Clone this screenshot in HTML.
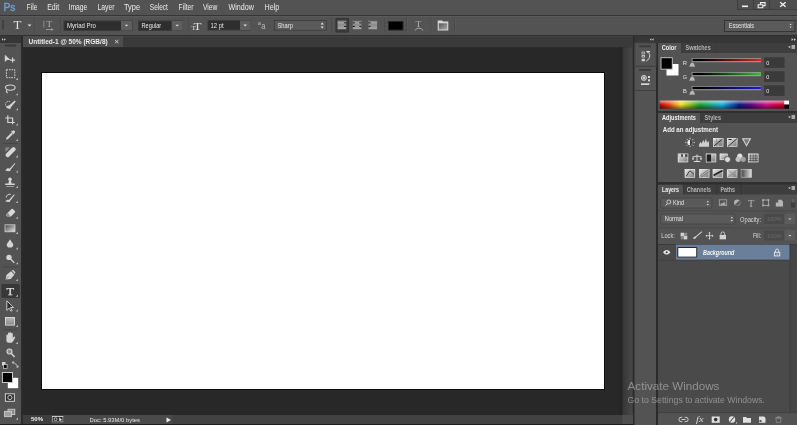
<!DOCTYPE html>
<html><head><meta charset="utf-8"><style>
*{margin:0;padding:0}
html,body{width:797px;height:425px;overflow:hidden;background:#282828}
svg{display:block;font-family:"Liberation Sans",sans-serif;will-change:transform}
</style></head><body>
<svg width="797" height="425" viewBox="0 0 797 425">
<rect x="0" y="0" width="797" height="425" fill="#282828" />
<rect x="0" y="0" width="797" height="15" fill="#535353" />
<rect x="0" y="15" width="797" height="1" fill="#363636" />
<rect x="0" y="16" width="797" height="1" fill="#5a5a5a" />
<rect x="0" y="17" width="797" height="18" fill="#535353" />
<rect x="0" y="35" width="797" height="1" fill="#303030" />
<rect x="0" y="36" width="21" height="389" fill="#535353" />
<rect x="0" y="36" width="21" height="7" fill="#363636" />
<rect x="21" y="36" width="2" height="389" fill="#2b2b2b" />
<rect x="23" y="36" width="610" height="11.3" fill="#3a3a3a" />
<rect x="23" y="36" width="610" height="0.9" fill="#444444" />
<rect x="23" y="36" width="100" height="11" fill="#4d4d4d" />
<rect x="41" y="72" width="564" height="318" fill="#0c0c0c" />
<rect x="42" y="73" width="562" height="316" fill="#ffffff" />
<rect x="23" y="415" width="600" height="9" fill="#424242" />
<rect x="622.5" y="415" width="10.5" height="9" fill="#4e4e4e" />
<rect x="23" y="415" width="149" height="9" fill="#4a4a4a" />
<rect x="0" y="424" width="797" height="1" fill="#1c1c1c" />
<defs><linearGradient id="gut" x1="0" x2="1" y1="0" y2="0"><stop offset="0" stop-color="#363636"/><stop offset="0.85" stop-color="#464646"/><stop offset="1" stop-color="#3a3a3a"/></linearGradient></defs>
<rect x="619" y="47" width="3.5" height="368" fill="#252525" />
<rect x="622.5" y="47.3" width="10.5" height="367.7" fill="url(#gut)" />
<rect x="633" y="36" width="1.5" height="389" fill="#2b2b2b" />
<rect x="634.5" y="36" width="162.5" height="7" fill="#363636" />
<rect x="634.5" y="43" width="21.5" height="382" fill="#535353" />
<rect x="656" y="43" width="2" height="382" fill="#2b2b2b" />
<rect x="658" y="43" width="139" height="382" fill="#535353" />
<text x="3.5" y="10.8" font-family="Liberation Sans" font-size="11.8" font-weight="normal" font-style="normal" fill="#6a9ed4" textLength="12.00" lengthAdjust="spacingAndGlyphs" stroke="#6a9ed4" stroke-width="0.45">Ps</text>
<text x="26.8" y="9.9" font-family="Liberation Sans" font-size="8.7" font-weight="normal" font-style="normal" fill="#ececec" textLength="10.50" lengthAdjust="spacingAndGlyphs" >File</text>
<text x="47.2" y="9.9" font-family="Liberation Sans" font-size="8.7" font-weight="normal" font-style="normal" fill="#ececec" textLength="12.00" lengthAdjust="spacingAndGlyphs" >Edit</text>
<text x="68.5" y="9.9" font-family="Liberation Sans" font-size="8.7" font-weight="normal" font-style="normal" fill="#ececec" textLength="18.80" lengthAdjust="spacingAndGlyphs" >Image</text>
<text x="97.5" y="9.9" font-family="Liberation Sans" font-size="8.7" font-weight="normal" font-style="normal" fill="#ececec" textLength="17.10" lengthAdjust="spacingAndGlyphs" >Layer</text>
<text x="124" y="9.9" font-family="Liberation Sans" font-size="8.7" font-weight="normal" font-style="normal" fill="#ececec" textLength="16.00" lengthAdjust="spacingAndGlyphs" >Type</text>
<text x="149.8" y="9.9" font-family="Liberation Sans" font-size="8.7" font-weight="normal" font-style="normal" fill="#ececec" textLength="18.10" lengthAdjust="spacingAndGlyphs" >Select</text>
<text x="178.6" y="9.9" font-family="Liberation Sans" font-size="8.7" font-weight="normal" font-style="normal" fill="#ececec" textLength="15.00" lengthAdjust="spacingAndGlyphs" >Filter</text>
<text x="203" y="9.9" font-family="Liberation Sans" font-size="8.7" font-weight="normal" font-style="normal" fill="#ececec" textLength="14.50" lengthAdjust="spacingAndGlyphs" >View</text>
<text x="228.5" y="9.9" font-family="Liberation Sans" font-size="8.7" font-weight="normal" font-style="normal" fill="#ececec" textLength="25.40" lengthAdjust="spacingAndGlyphs" >Window</text>
<text x="264.6" y="9.9" font-family="Liberation Sans" font-size="8.7" font-weight="normal" font-style="normal" fill="#ececec" textLength="14.70" lengthAdjust="spacingAndGlyphs" >Help</text>
<rect x="737" y="0" width="60" height="10" fill="#4e4e4e" />
<rect x="737" y="0" width="1" height="10" fill="#3e3e3e" />
<rect x="753" y="0" width="1" height="10" fill="#3e3e3e" />
<rect x="769" y="0" width="1" height="10" fill="#3e3e3e" />
<rect x="737" y="9" width="60" height="1" fill="#3e3e3e" />
<rect x="742" y="5.5" width="6" height="1.6" fill="#f0f0f0" />
<path d="M758.2 4.7h4.6v3h-4.6z" fill="none" stroke="#f0f0f0" stroke-width="1.1" />
<path d="M760.5 4.5v-1.9h4.6v3h-2" fill="none" stroke="#f0f0f0" stroke-width="1.1" />
<path d="M780.2 2.2l5.4 4.6M785.6 2.2l-5.4 4.6" fill="none" stroke="#f0f0f0" stroke-width="1.4" />
<rect x="2" y="20" width="2" height="9.7" fill="#404040" />
<text x="13.6" y="28.5" font-family="Liberation Serif" font-size="12.5" font-weight="normal" font-style="normal" fill="#e0e0e0" textLength="7.90" lengthAdjust="spacingAndGlyphs" >T</text>
<path d="M27.5 24.5h4l-2 2z" fill="#e0e0e0" />
<rect x="34.5" y="17" width="1" height="16" fill="#484848" />
<rect x="35.5" y="17" width="1" height="16" fill="#595959" />
<rect x="60.2" y="17" width="1" height="16" fill="#484848" />
<rect x="61.2" y="17" width="1" height="16" fill="#595959" />
<rect x="188.5" y="17" width="1" height="16" fill="#484848" />
<rect x="189.5" y="17" width="1" height="16" fill="#595959" />
<rect x="331.5" y="17" width="1" height="16" fill="#484848" />
<rect x="332.5" y="17" width="1" height="16" fill="#595959" />
<rect x="384.5" y="17" width="1" height="16" fill="#484848" />
<rect x="385.5" y="17" width="1" height="16" fill="#595959" />
<rect x="406" y="17" width="1" height="16" fill="#484848" />
<rect x="407" y="17" width="1" height="16" fill="#595959" />
<rect x="430.5" y="17" width="1" height="16" fill="#484848" />
<rect x="431.5" y="17" width="1" height="16" fill="#595959" />
<rect x="454" y="17" width="1" height="16" fill="#484848" />
<rect x="455" y="17" width="1" height="16" fill="#595959" />
<text x="46.2" y="27.4" font-family="Liberation Serif" font-size="9" font-weight="normal" font-style="normal" fill="#b0b0b0" textLength="6.00" lengthAdjust="spacingAndGlyphs" >T</text>
<rect x="43.4" y="20.8" width="0.9" height="6.8" fill="#909090" />
<rect x="46" y="29.1" width="6" height="0.8" fill="#a8a8a8" />
<path d="M51.5 28l1.8 1.5-1.8 1.5z" fill="#a8a8a8" />
<rect x="63.5" y="20.5" width="69" height="10.5" fill="#3b3b3b" />
<rect x="64.5" y="21.5" width="57" height="8.5" fill="#2e2e2e" />
<rect x="121" y="21" width="11" height="9.5" fill="#5e5e5e" />
<path d="M124.8 24.8h3.4l-1.7 1.8z" fill="#e0e0e0" />
<text x="66.9" y="27.8" font-family="Liberation Sans" font-size="6.4" font-weight="normal" font-style="normal" fill="#e8e8e8" textLength="29.00" lengthAdjust="spacingAndGlyphs" >Myriad Pro</text>
<rect x="138" y="20.5" width="45" height="10.5" fill="#3b3b3b" />
<rect x="139" y="21.5" width="33" height="8.5" fill="#2e2e2e" />
<rect x="171.7" y="21" width="11" height="9.5" fill="#5e5e5e" />
<path d="M175.5 24.8h3.4l-1.7 1.8z" fill="#e0e0e0" />
<text x="141.6" y="27.8" font-family="Liberation Sans" font-size="6.4" font-weight="normal" font-style="normal" fill="#e8e8e8" textLength="19.50" lengthAdjust="spacingAndGlyphs" >Regular</text>
<text x="193.5" y="29.5" font-family="Liberation Serif" font-size="10" font-weight="normal" font-style="normal" fill="#e0e0e0" textLength="8.00" lengthAdjust="spacingAndGlyphs" >T</text>
<text x="191.5" y="29.5" font-family="Liberation Serif" font-size="6" font-weight="normal" font-style="normal" fill="#e0e0e0" textLength="4.50" lengthAdjust="spacingAndGlyphs" >T</text>
<rect x="207.5" y="20" width="43" height="10.5" fill="#3b3b3b" />
<rect x="208.5" y="21" width="31.5" height="8.5" fill="#2e2e2e" />
<rect x="240" y="20.5" width="10.5" height="9.5" fill="#5e5e5e" />
<path d="M243.5 24.6h3.4l-1.7 1.8z" fill="#e0e0e0" />
<text x="210.6" y="27.7" font-family="Liberation Sans" font-size="6.4" font-weight="normal" font-style="normal" fill="#e8e8e8" textLength="13.10" lengthAdjust="spacingAndGlyphs" >12 pt</text>
<text x="257.8" y="25.3" font-family="Liberation Sans" font-size="6" font-weight="normal" font-style="normal" fill="#b8b8b8" textLength="3.20" lengthAdjust="spacingAndGlyphs" >a</text>
<text x="261.3" y="29.4" font-family="Liberation Sans" font-size="8.5" font-weight="normal" font-style="normal" fill="#b8b8b8" textLength="4.30" lengthAdjust="spacingAndGlyphs" >a</text>
<rect x="274" y="20" width="52.5" height="10.5" fill="#3a3a3a" />
<rect x="274.8" y="20.8" width="51" height="9" fill="#5a5a5a" />
<text x="277.5" y="27.7" font-family="Liberation Sans" font-size="6.4" font-weight="normal" font-style="normal" fill="#e8e8e8" textLength="15.50" lengthAdjust="spacingAndGlyphs" >Sharp</text>
<path d="M320.6 24.6l1.6-2 1.6 2zM320.6 26.4l1.6 2 1.6-2z" fill="#e0e0e0" />
<rect x="335.5" y="18.3" width="13.5" height="14.3" fill="#2e2e2e" rx="1"/>
<rect x="336.3" y="19.1" width="12" height="12.7" fill="#3c3c3c" rx="0.8"/>
<defs><linearGradient id="alg" x1="0" x2="0" y1="0" y2="1"><stop offset="0" stop-color="#b4b4b4"/><stop offset="0.5" stop-color="#8a8a8a"/><stop offset="1" stop-color="#a8a8a8"/></linearGradient></defs>
<rect x="337.6" y="20.4" width="8.6" height="8.8" fill="url(#alg)" />
<rect x="337.6" y="20.4" width="8.6" height="0.9" fill="#3a3a3a" />
<rect x="344.20000000000005" y="22.3" width="2" height="1.1" fill="#1e1e1e" />
<rect x="344.20000000000005" y="25.9" width="2" height="1.1" fill="#1e1e1e" />
<rect x="352.8" y="20.4" width="8.6" height="8.8" fill="url(#alg)" />
<rect x="352.8" y="20.4" width="8.6" height="0.9" fill="#3a3a3a" />
<rect x="359.40000000000003" y="22.3" width="2" height="1.1" fill="#1e1e1e" />
<rect x="352.8" y="22.3" width="2" height="1.1" fill="#1e1e1e" />
<rect x="359.40000000000003" y="25.9" width="2" height="1.1" fill="#1e1e1e" />
<rect x="352.8" y="25.9" width="2" height="1.1" fill="#1e1e1e" />
<rect x="368.5" y="20.4" width="8.6" height="8.8" fill="url(#alg)" />
<rect x="368.5" y="20.4" width="8.6" height="0.9" fill="#3a3a3a" />
<rect x="368.5" y="22.3" width="2" height="1.1" fill="#1e1e1e" />
<rect x="368.5" y="25.9" width="2" height="1.1" fill="#1e1e1e" />
<rect x="388" y="21" width="15.5" height="9.5" fill="#262626" />
<rect x="389" y="22" width="13.5" height="7.5" fill="#000000" />
<text x="415.6" y="26.6" font-family="Liberation Serif" font-size="7.2" font-weight="normal" font-style="normal" fill="#b0b0b0" textLength="5.80" lengthAdjust="spacingAndGlyphs" >T</text>
<path d="M414.8 30.4q4.2-4.6 8.4 0" fill="none" stroke="#b0b0b0" stroke-width="0.9" />
<defs><linearGradient id="pnl" x1="0" x2="1" y1="0" y2="1"><stop offset="0" stop-color="#555"/><stop offset="1" stop-color="#aaa"/></linearGradient></defs>
<path d="M437.7 20.5h4.5l0.8 1h5.3v9.1h-10.6z" fill="#d8d8d8" />
<rect x="438.8" y="23.3" width="8.4" height="6.2" fill="url(#pnl)" />
<rect x="724" y="20" width="71.5" height="12" fill="#343434" />
<rect x="725" y="21" width="69.5" height="10" fill="#5a5a5a" />
<text x="728.8" y="27.8" font-family="Liberation Sans" font-size="6.6" font-weight="normal" font-style="normal" fill="#e8e8e8" textLength="25.30" lengthAdjust="spacingAndGlyphs" >Essentials</text>
<path d="M789.6 25l1-1.4 1 1.4zM789.6 26.6l1 1.4 1-1.4z" fill="#e0e0e0" />
<path d="M2 38.3l1.6 1.2-1.6 1.2zM4.2 38.3l1.6 1.2-1.6 1.2z" fill="#d0d0d0" />
<rect x="5" y="44.6" width="11" height="2" fill="#3a3a3a" />
<path d="M4.8 54.8v7.2l2.2-1.9h3.6z" fill="#d4d4d4" />
<path d="M12.6 57.6v5M10.1 60.1h5" fill="none" stroke="#d4d4d4" stroke-width="1.2" />
<path d="M6.4 69.7h8.4v8h-8.4z" fill="none" stroke="#d4d4d4" stroke-width="1" stroke-dasharray="1.6 1"/>
<path d="M15.7 80.0h2.3v-2.3z" fill="#b4b4b4" />
<path d="M10.5 85c2.7 0 4.6 1.1 4.6 2.6s-2.2 2.6-4.8 2.6-4.8-1-4.8-2.6 2.3-2.6 5-2.6zM6.8 89.8c-0.6 1 -0.3 2.4 0.8 3.3" fill="none" stroke="#d4d4d4" stroke-width="1.1" />
<path d="M15.7 95.2h2.3v-2.3z" fill="#b4b4b4" />
<path d="M10 101.5c-2.5-0.6-4.5 0.5-4.5 2.8 0 1.5 1 2.5 2 3" fill="none" stroke="#d4d4d4" stroke-width="0.9" stroke-dasharray="1.2 0.8"/>
<path d="M6.5 107.8c0-1.5 1-2.6 2.6-2.4l5.6-4.8 1 1-4.8 5.6c0.1 1.6-1.1 2.6-4.4 0.6z" fill="#d4d4d4" />
<path d="M15.7 110.2h2.3v-2.3z" fill="#b4b4b4" />
<path d="M7.8 115.2v7.3h7M5.3 118h7.3v6.2" fill="none" stroke="#d4d4d4" stroke-width="1.2" />
<path d="M15.7 125.6h2.3v-2.3z" fill="#b4b4b4" />
<path d="M6 139.6l0.4-1.8 5.2-5.2 1.4 1.4-5.2 5.2z" fill="#d4d4d4" />
<path d="M11 131.6l2.8-1.4 1.4 1.4-1.4 2.8z" fill="#d4d4d4" />
<path d="M15.7 141.0h2.3v-2.3z" fill="#b4b4b4" />
<rect x="3" y="143" width="15" height="0.8" fill="#444444" />
<path d="M6 153.8l6.3-6.3a1.6 1.6 0 0 1 2.3 0l0.6 0.6a1.6 1.6 0 0 1 0 2.3l-6.3 6.3a1.6 1.6 0 0 1-2.3 0l-0.6-0.6a1.6 1.6 0 0 1 0-2.3z" fill="#d8d8d8" />
<path d="M5.5 147.5h4.5l-4.5 4.5z" fill="#8c8c8c" />
<path d="M15.7 157.4h2.3v-2.3z" fill="#b4b4b4" />
<path d="M5.3 170.5c1.5-2.5 3-2.6 4.3-1.8l5.2-5.8 0.6 0.6-4.8 6.2c0.3 1.2-1 2.2-5.3 0.8z" fill="#d4d4d4" />
<path d="M15.7 172.60000000000002h2.3v-2.3z" fill="#b4b4b4" />
<circle cx="10" cy="179.2" r="1.8" fill="#d4d4d4"/>
<path d="M9 180.5h2l0.5 3h3.3v1.6h-9.6v-1.6h3.3z" fill="#d4d4d4" />
<rect x="6.3" y="186" width="7.6" height="0.9" fill="#a8a8a8" />
<path d="M15.7 188.0h2.3v-2.3z" fill="#b4b4b4" />
<path d="M6.2 197.5a3.5 3.5 0 0 1 4.6-3.1" fill="none" stroke="#d4d4d4" stroke-width="1" />
<path d="M5.3 201.6c1.4-2 2.6-2.1 3.6-1.5l5.2-5.8 0.6 0.6-4.6 6c0.3 1-0.8 1.6-4.8 0.7z" fill="#d4d4d4" />
<path d="M15.7 203.0h2.3v-2.3z" fill="#b4b4b4" />
<path d="M6 214.5l5.5-5.5a1 1 0 0 1 1.4 0l2 2a1 1 0 0 1 0 1.4l-4 4h-3.5l-1.4-1.4a0.4 0.4 0 0 1 0-0.5z" fill="#d8d8d8" />
<path d="M6 214.5l1.5 1.9h3l-2.6-3.6z" fill="#909090" />
<path d="M15.7 218.8h2.3v-2.3z" fill="#b4b4b4" />
<defs><linearGradient id="gr" x1="0" x2="1" y1="0" y2="1"><stop offset="0" stop-color="#444"/><stop offset="1" stop-color="#e8e8e8"/></linearGradient></defs>
<rect x="5" y="224.8" width="10" height="7" fill="url(#gr)" />
<rect x="5" y="224.8" width="10" height="7" fill="none" stroke="#d0d0d0" stroke-width="0.8"/>
<path d="M15.7 234.10000000000002h2.3v-2.3z" fill="#b4b4b4" />
<path d="M10 239.2c-1.3 2.4-3.3 4.2-3.3 5.6a3.3 2.8 0 0 0 6.6 0c0-1.4-2-3.2-3.3-5.6z" fill="#d4d4d4" />
<path d="M15.7 249.4h2.3v-2.3z" fill="#b4b4b4" />
<circle cx="9" cy="257.4" r="2.7" fill="#d4d4d4"/>
<path d="M10.8 259.3l3.5 3.6" fill="none" stroke="#d4d4d4" stroke-width="1.3" />
<path d="M15.7 264.2h2.3v-2.3z" fill="#b4b4b4" />
<rect x="3" y="266.6" width="15" height="0.8" fill="#444444" />
<path d="M5.5 279.6l1.2-4.8 4.3-3.6 3.4 3.4-3.6 4.3z" fill="#d4d4d4" />
<path d="M11.6 270.6l1.6-0.6 2.2 2.2-0.6 1.6z" fill="#d4d4d4" />
<path d="M5.8 279.4l3-3" fill="none" stroke="#555" stroke-width="0.6" />
<path d="M15.7 281.0h2.3v-2.3z" fill="#b4b4b4" />
<rect x="1.4" y="284.1" width="18.4" height="13.8" fill="#383838" rx="1.5"/>
<text x="6.5" y="294.8" font-family="Liberation Serif" font-size="11" font-weight="normal" font-style="normal" fill="#e0e0e0" textLength="7.60" lengthAdjust="spacingAndGlyphs" stroke="#e0e0e0" stroke-width="0.25">T</text>
<path d="M15.7 296.8h2.3v-2.3z" fill="#b4b4b4" />
<path d="M6.8 300.8v9.6l2.3-2.2 1.8 3 1.3-0.7-1.8-3h3.2z" fill="#2e2e2e" stroke="#d8d8d8" stroke-width="0.9"/>
<path d="M15.7 311.6h2.3v-2.3z" fill="#b4b4b4" />
<defs><linearGradient id="shg" x1="0" x2="0" y1="0" y2="1"><stop offset="0" stop-color="#b8b8b8"/><stop offset="1" stop-color="#888"/></linearGradient></defs>
<rect x="5.5" y="317.5" width="9" height="7.6" fill="url(#shg)" />
<rect x="5.5" y="317.5" width="9" height="7.6" fill="none" stroke="#dcdcdc" stroke-width="0.9"/>
<path d="M15.7 327.1h2.3v-2.3z" fill="#b4b4b4" />
<rect x="3" y="329.4" width="15" height="0.8" fill="#444444" />
<path d="M6.4 337.8v-2.6a0.8 0.8 0 0 1 1.6 0v1.8v-3.6a0.8 0.8 0 0 1 1.6 0v3v-3.4a0.8 0.8 0 0 1 1.6 0v3.4v-2.6a0.8 0.8 0 0 1 1.6 0v4.4l1-1.4a0.8 0.8 0 0 1 1.3 0.9l-2 3.6c-0.6 1-1.6 1.5-3 1.5h-1.2c-1.8 0-2.5-1.2-2.5-2.5z" fill="#d4d4d4" />
<path d="M15.7 344.0h2.3v-2.3z" fill="#b4b4b4" />
<circle cx="9.5" cy="351.5" r="2.5" fill="#8a8a8a" stroke="#d4d4d4" stroke-width="1.1"/>
<path d="M11.4 353.5l3.2 3.6" fill="none" stroke="#d4d4d4" stroke-width="1.5" />
<rect x="2" y="362" width="3.5" height="3.5" fill="#d4d4d4" />
<rect x="3.5" y="364.5" width="3.6" height="4" fill="#0a0a0a" />
<rect x="3.5" y="364.5" width="3.6" height="4" fill="none" stroke="#d4d4d4" stroke-width="0.7"/>
<path d="M12.3 362.3l1.5-0.8M12.3 362.3l0.8 1.4M12.5 362.5c2.5 0.5 4.5 2.2 5 4.2M17.8 367.4l0.6-1.6M17.8 367.4l-1.5-0.6" fill="none" stroke="#d4d4d4" stroke-width="0.9" />
<rect x="7.8" y="377.8" width="10.4" height="10.4" fill="#ffffff" />
<rect x="1.9" y="372" width="11.1" height="11" fill="#cacaca" />
<rect x="2.9" y="373" width="9.1" height="9" fill="#000000" />
<rect x="4.9" y="393.3" width="10" height="8.5" fill="#d0d0d0" />
<rect x="5.9" y="394.3" width="8" height="6.5" fill="#2e2e2e" />
<circle cx="9.9" cy="397.5" r="2.1" fill="none" stroke="#d4d4d4" stroke-width="0.9"/>
<rect x="8" y="409.2" width="6.8" height="5.4" fill="#8c8c8c" />
<rect x="8" y="409.2" width="6.8" height="5.4" fill="none" stroke="#d4d4d4" stroke-width="0.8"/>
<rect x="4.6" y="411.3" width="6.8" height="5.4" fill="#a0a0a0" />
<rect x="4.6" y="411.3" width="6.8" height="5.4" fill="none" stroke="#d8d8d8" stroke-width="0.8"/>
<path d="M15.7 419.8h2.3v-2.3z" fill="#b4b4b4" />
<text x="28.5" y="44" font-family="Liberation Sans" font-size="6.4" font-weight="bold" font-style="normal" fill="#ebebeb" textLength="79.20" lengthAdjust="spacingAndGlyphs" >Untitled-1 @ 50% (RGB/8)</text>
<path d="M115 40l3.5 3.2M118.5 40l-3.5 3.2" fill="none" stroke="#d8d8d8" stroke-width="0.9" />
<rect x="23" y="415" width="28" height="9" fill="#3e3e3e" />
<text x="31" y="421.4" font-family="Liberation Sans" font-size="6" font-weight="bold" font-style="normal" fill="#f0f0f0" textLength="12.10" lengthAdjust="spacingAndGlyphs" >50%</text>
<rect x="52.1" y="416" width="11.1" height="6.2" fill="#9a9a9a" />
<rect x="52.1" y="416" width="11.1" height="0.9" fill="#e0e0e0" />
<rect x="52.9" y="416.9" width="9.5" height="4.6" fill="#2a2a2a" />
<circle cx="55.6" cy="419.2" r="1.5" fill="none" stroke="#d8d8d8" stroke-width="0.8"/>
<path d="M59.2 417.2v4l1-0.9 0.8 1.4 0.6-0.3-0.8-1.3h1.3z" fill="#e8e8e8" />
<text x="89.5" y="421.8" font-family="Liberation Sans" font-size="6" font-weight="normal" font-style="normal" fill="#e4e4e4" textLength="50.50" lengthAdjust="spacingAndGlyphs" >Doc: 5.93M/0 bytes</text>
<path d="M166.5 417.5v5l4.5-2.5z" fill="#f0f0f0" />
<path d="M649.8 39.5l1.6-1.2v2.4zM652 39.5l1.6-1.2v2.4z" fill="#d0d0d0" />
<path d="M791.6 38.3l1.8 1.3-1.8 1.3zM794 38.3l1.8 1.3-1.8 1.3z" fill="#d8d8d8" />
<rect x="635" y="66" width="21" height="1" fill="#3e3e3e" />
<rect x="635" y="90" width="21" height="1" fill="#3e3e3e" />
<rect x="635" y="43" width="21" height="23" fill="none" stroke="#474747" stroke-width="1"/>
<rect x="639" y="45.4" width="12" height="1.8" fill="#3a3a3a" />
<rect x="639" y="69" width="12" height="1.8" fill="#3a3a3a" />
<rect x="642" y="52" width="2.5" height="2" fill="none" stroke="#d0d0d0" stroke-width="0.7"/>
<rect x="641.7" y="55" width="3.2" height="2.5" fill="#d0d0d0" />
<rect x="642.6" y="55.8" width="1.4" height="1" fill="#555" />
<rect x="641.7" y="58.8" width="3.2" height="2.5" fill="#d0d0d0" />
<path d="M645.8 51h4.2v1.2h-2.2z" fill="#e0e0e0" />
<path d="M646 51.2l1.6 0.2 0 1.8z" fill="#e0e0e0" />
<path d="M647.6 52.2c3 0.8 3.2 6.2-1.4 9" fill="none" stroke="#d8d8d8" stroke-width="1" />
<circle cx="643.9" cy="77.9" r="2.5" fill="#8a8a8a" stroke="#d8d8d8" stroke-width="0.9"/>
<circle cx="643.9" cy="77.9" r="1.1" fill="#d0d0d0"/>
<rect x="648" y="76" width="2" height="2" fill="#d8d8d8" />
<rect x="648" y="79.3" width="2" height="2" fill="#d8d8d8" />
<rect x="641" y="83.3" width="8" height="1.7" fill="#d8d8d8" />
<path d="M649 83.6h1.5l-0.75 1z" fill="#d8d8d8" />
<rect x="658" y="43" width="139" height="10" fill="#3e3e3e" />
<rect x="658" y="43" width="23" height="10" fill="#535353" />
<rect x="681" y="43" width="1" height="10" fill="#3a3a3a" />
<rect x="715" y="43" width="1" height="10" fill="#3a3a3a" />
<text x="661.8" y="50.1" font-family="Liberation Sans" font-size="6.6" font-weight="bold" font-style="normal" fill="#f0f0f0" textLength="14.60" lengthAdjust="spacingAndGlyphs" >Color</text>
<text x="685.5" y="50.1" font-family="Liberation Sans" font-size="6.6" font-weight="bold" font-style="normal" fill="#b4b4b4" textLength="25.20" lengthAdjust="spacingAndGlyphs" >Swatches</text>
<path d="M788 46.5h3l-1.5 1.6z" fill="#d8d8d8" />
<rect x="791.5" y="45.0" width="3.5" height="4" fill="#a8a8a8" />
<rect x="666.5" y="64" width="12" height="11.5" fill="#ffffff" />
<rect x="660.5" y="57.2" width="12.3" height="12.5" fill="#b8b8b8" />
<rect x="661.5" y="58.2" width="10.3" height="10.5" fill="#000000" />
<defs><linearGradient id="sR" x1="0" x2="1"><stop offset="0" stop-color="#000"/><stop offset="0.12" stop-color="#000"/><stop offset="1" stop-color="#e02020"/></linearGradient></defs>
<rect x="691.7" y="58.1" width="69.2" height="4.1" fill="#a4a4a4" />
<rect x="692.5" y="58.8" width="68.4" height="2.4" fill="url(#sR)" />
<text x="682.8" y="64.7" font-family="Liberation Sans" font-size="6.2" font-weight="normal" font-style="normal" fill="#e0e0e0" textLength="4.20" lengthAdjust="spacingAndGlyphs" >R</text>
<path d="M689.4 67.0c0.3-2 1.3-4.3 2.8-4.5 1.5 0.2 2.5 2.5 2.8 4.5z" fill="#b8b8b8" />
<rect x="689.4" y="66.6" width="5.6" height="0.5" fill="#6a6a6a" />
<rect x="764.2" y="57.3" width="20.4" height="10.6" fill="#3a3a3a" />
<text x="766.3" y="64.7" font-family="Liberation Sans" font-size="6" font-weight="normal" font-style="normal" fill="#e8e8e8" textLength="3.00" lengthAdjust="spacingAndGlyphs" >0</text>
<defs><linearGradient id="sG" x1="0" x2="1"><stop offset="0" stop-color="#000"/><stop offset="0.12" stop-color="#000"/><stop offset="1" stop-color="#30c030"/></linearGradient></defs>
<rect x="691.7" y="72.10000000000001" width="69.2" height="4.1" fill="#a4a4a4" />
<rect x="692.5" y="72.80000000000001" width="68.4" height="2.4" fill="url(#sG)" />
<text x="682.8" y="78.7" font-family="Liberation Sans" font-size="6.2" font-weight="normal" font-style="normal" fill="#e0e0e0" textLength="4.20" lengthAdjust="spacingAndGlyphs" >G</text>
<path d="M689.4 81.0c0.3-2 1.3-4.3 2.8-4.5 1.5 0.2 2.5 2.5 2.8 4.5z" fill="#b8b8b8" />
<rect x="689.4" y="80.60000000000001" width="5.6" height="0.5" fill="#6a6a6a" />
<rect x="764.2" y="71.30000000000001" width="20.4" height="10.6" fill="#3a3a3a" />
<text x="766.3" y="78.7" font-family="Liberation Sans" font-size="6" font-weight="normal" font-style="normal" fill="#e8e8e8" textLength="3.00" lengthAdjust="spacingAndGlyphs" >0</text>
<defs><linearGradient id="sB" x1="0" x2="1"><stop offset="0" stop-color="#000"/><stop offset="0.12" stop-color="#000"/><stop offset="1" stop-color="#1a1ad0"/></linearGradient></defs>
<rect x="691.7" y="86.10000000000001" width="69.2" height="4.1" fill="#a4a4a4" />
<rect x="692.5" y="86.80000000000001" width="68.4" height="2.4" fill="url(#sB)" />
<text x="682.8" y="92.7" font-family="Liberation Sans" font-size="6.2" font-weight="normal" font-style="normal" fill="#e0e0e0" textLength="4.20" lengthAdjust="spacingAndGlyphs" >B</text>
<path d="M689.4 95.0c0.3-2 1.3-4.3 2.8-4.5 1.5 0.2 2.5 2.5 2.8 4.5z" fill="#b8b8b8" />
<rect x="689.4" y="94.60000000000001" width="5.6" height="0.5" fill="#6a6a6a" />
<rect x="764.2" y="85.30000000000001" width="20.4" height="10.6" fill="#3a3a3a" />
<text x="766.3" y="92.7" font-family="Liberation Sans" font-size="6" font-weight="normal" font-style="normal" fill="#e8e8e8" textLength="3.00" lengthAdjust="spacingAndGlyphs" >0</text>
<defs><linearGradient id="spec" x1="0" x2="1"><stop offset="0" stop-color="#c00000"/><stop offset="0.07" stop-color="#e04010"/><stop offset="0.17" stop-color="#f0e030"/><stop offset="0.32" stop-color="#20a030"/><stop offset="0.5" stop-color="#20b0e0"/><stop offset="0.64" stop-color="#101880"/><stop offset="0.73" stop-color="#600880"/><stop offset="0.86" stop-color="#d01080"/><stop offset="1" stop-color="#d00020"/></linearGradient><linearGradient id="specv" x1="0" x2="0" y1="0" y2="1"><stop offset="0" stop-color="#fff" stop-opacity="0.6"/><stop offset="0.5" stop-color="#fff" stop-opacity="0"/><stop offset="0.5" stop-color="#000" stop-opacity="0"/><stop offset="1" stop-color="#000" stop-opacity="0.5"/></linearGradient></defs>
<rect x="659.7" y="100.6" width="124.5" height="8.1" fill="url(#spec)" />
<rect x="659.7" y="100.6" width="124.5" height="8.1" fill="url(#specv)" />
<rect x="784.2" y="100.6" width="4.8" height="4" fill="#ffffff" />
<rect x="784.2" y="104.6" width="4.8" height="4.1" fill="#000000" />
<rect x="658" y="111" width="139" height="2" fill="#2f2f2f" />
<rect x="658" y="113" width="139" height="10" fill="#3e3e3e" />
<rect x="658" y="113" width="42" height="10" fill="#535353" />
<rect x="700" y="113" width="1" height="10" fill="#3a3a3a" />
<rect x="725.6" y="113" width="1" height="10" fill="#3a3a3a" />
<text x="662" y="119.9" font-family="Liberation Sans" font-size="6.6" font-weight="bold" font-style="normal" fill="#f0f0f0" textLength="34.00" lengthAdjust="spacingAndGlyphs" >Adjustments</text>
<text x="704.6" y="119.9" font-family="Liberation Sans" font-size="6.6" font-weight="bold" font-style="normal" fill="#b4b4b4" textLength="16.40" lengthAdjust="spacingAndGlyphs" >Styles</text>
<path d="M788 116.5h3l-1.5 1.6z" fill="#d8d8d8" />
<rect x="791.5" y="115.0" width="3.5" height="4" fill="#a8a8a8" />
<text x="662.7" y="131.6" font-family="Liberation Sans" font-size="7" font-weight="bold" font-style="normal" fill="#f0f0f0" textLength="55.30" lengthAdjust="spacingAndGlyphs" >Add an adjustment</text>
<defs><linearGradient id="ig" x1="0" x2="1" y1="0" y2="1"><stop offset="0" stop-color="#f0f0f0"/><stop offset="1" stop-color="#707070"/></linearGradient></defs>
<circle cx="690" cy="142.4" r="2.6" fill="#e8e8e8"/>
<path d="M690 139.8a2.6 2.6 0 0 1 0 5.2z" fill="#404040" />
<path d="M690 137.6v1.4M690 145.8v1.4M685 142.4h1.4M693.6 142.4h1.4M686.6 139l1 1M692.4 144.8l1 1M686.6 145.8l1-1M692.4 140l1-1" fill="none" stroke="#e8e8e8" stroke-width="0.8" />
<path d="M699 146.8v-2l1.5-3 1.2 2 1.5-4 1.2 3 1.5-4 1.2 4 1.2-2 0.7 2v4z" fill="#d0d0d0" />
<rect x="713" y="138" width="10.5" height="8.8" fill="url(#ig)" />
<rect x="713.5" y="138.5" width="9.5" height="7.800000000000001" fill="none" stroke="#e0e0e0" stroke-width="0.7"/>
<path d="M716.5 138.5v8M720 138.5v8M713.5 141.3h10M713.5 144h10" fill="none" stroke="#777" stroke-width="0.5" />
<path d="M714 146l8.5-7" fill="none" stroke="#222" stroke-width="0.9" />
<rect x="727" y="138" width="10.5" height="8.8" fill="url(#ig)" />
<rect x="727.5" y="138.5" width="9.5" height="7.800000000000001" fill="none" stroke="#e0e0e0" stroke-width="0.7"/>
<path d="M728 146.5l9-8" fill="none" stroke="#222" stroke-width="0.8" />
<path d="M728.5 139h3v1h-3z" fill="#222" />
<path d="M741.8 138.2h9.5l-4.75 8.6z" fill="#d8d8d8" />
<path d="M743.5 139.2h6l-3 5.5z" fill="#7a7a7a" />
<rect x="677.8" y="153.6" width="10.5" height="8.8" fill="url(#ig)" />
<rect x="678.3" y="154.1" width="9.5" height="7.800000000000001" fill="none" stroke="#e0e0e0" stroke-width="0.7"/>
<rect x="678.5" y="154.3" width="9" height="2.4" fill="#444" />
<rect x="678.5" y="154.3" width="2.5" height="2.4" fill="#e8e8e8" />
<rect x="683" y="154.3" width="2" height="2.4" fill="#e8e8e8" />
<path d="M697 154.5v6.5M692.5 157l4.5-1 4.5 1" fill="none" stroke="#e0e0e0" stroke-width="0.9" />
<path d="M691.8 159.5l1.2-2.8 1.2 2.8zM699.8 159.5l1.2-2.8 1.2 2.8z" fill="#e0e0e0" />
<rect x="693.8" y="161" width="6.5" height="1" fill="#e0e0e0" />
<rect x="705.8" y="153.6" width="10.5" height="8.8" fill="url(#ig)" />
<rect x="706.3" y="154.1" width="9.5" height="7.800000000000001" fill="none" stroke="#e0e0e0" stroke-width="0.7"/>
<rect x="706.6" y="154.4" width="4.5" height="7.2" fill="#222" />
<rect x="719.7" y="153.6" width="8" height="6.5" fill="url(#ig)" />
<rect x="720.2" y="154.1" width="7" height="5.5" fill="none" stroke="#e0e0e0" stroke-width="0.7"/>
<circle cx="727.5" cy="159.5" r="3" fill="#d8d8d8" stroke="#444" stroke-width="0.7"/>
<circle cx="739.8" cy="156.2" r="2.6" fill="#e0e0e0"/><circle cx="738.2" cy="159.3" r="2.6" fill="#c0c0c0"/><circle cx="743.2" cy="159.3" r="2.6" fill="#a0a0a0"/>
<rect x="748" y="153.6" width="10.5" height="8.8" fill="url(#ig)" />
<rect x="748.5" y="154.1" width="9.5" height="7.800000000000001" fill="none" stroke="#e0e0e0" stroke-width="0.7"/>
<path d="M748.5 155.9h9.5M748.5 158.2h9.5M748.5 160.5h9.5M750.6 154v8M753.2 154v8M755.8 154v8" fill="none" stroke="#444" stroke-width="0.6" />
<rect x="684.7" y="169" width="10.5" height="8.8" fill="url(#ig)" />
<rect x="685.2" y="169.5" width="9.5" height="7.800000000000001" fill="none" stroke="#e0e0e0" stroke-width="0.7"/>
<path d="M686 176c2 0 2-5 4-5s2 3 4 3" fill="none" stroke="#333" stroke-width="0.9" />
<rect x="699" y="169" width="10.5" height="8.8" fill="url(#ig)" />
<rect x="699.5" y="169.5" width="9.5" height="7.800000000000001" fill="none" stroke="#e0e0e0" stroke-width="0.7"/>
<path d="M699.5 176.5l9-7M701 177.5l8-6" fill="none" stroke="#777" stroke-width="0.9" />
<rect x="712.7" y="169" width="10.5" height="8.8" fill="url(#ig)" />
<rect x="713.2" y="169.5" width="9.5" height="7.800000000000001" fill="none" stroke="#e0e0e0" stroke-width="0.7"/>
<path d="M713.5 175.5l9-5" fill="none" stroke="#222" stroke-width="1.6" />
<rect x="726.9" y="169" width="10.5" height="8.8" fill="url(#ig)" />
<rect x="727.4" y="169.5" width="9.5" height="7.800000000000001" fill="none" stroke="#e0e0e0" stroke-width="0.7"/>
<path d="M727.5 169.5l10 8M737.5 169.5l-10 8" fill="none" stroke="#888" stroke-width="0.8" />
<defs><linearGradient id="gm" x1="0" x2="1"><stop offset="0" stop-color="#404040"/><stop offset="1" stop-color="#e0e0e0"/></linearGradient></defs>
<rect x="740.8" y="169" width="10.8" height="8.5" fill="url(#gm)" />
<rect x="741.1" y="169.3" width="10.2" height="7.9" fill="none" stroke="#c8c8c8" stroke-width="0.6"/>
<rect x="658" y="182" width="139" height="2.8" fill="#2f2f2f" />
<rect x="658" y="184.8" width="139" height="9.7" fill="#3e3e3e" />
<rect x="658" y="184.8" width="25" height="9.7" fill="#535353" />
<rect x="683" y="184.8" width="1" height="9.7" fill="#363636" />
<rect x="716.4" y="184.8" width="1" height="9.7" fill="#363636" />
<rect x="740.7" y="184.8" width="1" height="9.7" fill="#363636" />
<text x="662" y="192" font-family="Liberation Sans" font-size="6.6" font-weight="bold" font-style="normal" fill="#f0f0f0" textLength="17.00" lengthAdjust="spacingAndGlyphs" >Layers</text>
<text x="686.7" y="192" font-family="Liberation Sans" font-size="6.6" font-weight="bold" font-style="normal" fill="#b4b4b4" textLength="24.20" lengthAdjust="spacingAndGlyphs" >Channels</text>
<text x="720.6" y="192" font-family="Liberation Sans" font-size="6.6" font-weight="bold" font-style="normal" fill="#b4b4b4" textLength="14.40" lengthAdjust="spacingAndGlyphs" >Paths</text>
<path d="M788 187.5h3l-1.5 1.6z" fill="#d8d8d8" />
<rect x="791.5" y="186.0" width="3.5" height="4" fill="#a8a8a8" />
<rect x="660.7" y="198.1" width="51.2" height="10" fill="#5a5a5a" rx="1.5"/>
<rect x="660.7" y="198.1" width="51.2" height="10" fill="none" rx="1.5" stroke="#444" stroke-width="0.8"/>
<circle cx="668.8" cy="202" r="2" fill="none" stroke="#e0e0e0" stroke-width="0.8"/>
<path d="M667.4 203.5l-1.8 2" fill="none" stroke="#e0e0e0" stroke-width="0.9" />
<text x="673" y="205.3" font-family="Liberation Sans" font-size="6.6" font-weight="normal" font-style="normal" fill="#e8e8e8" textLength="11.20" lengthAdjust="spacingAndGlyphs" >Kind</text>
<path d="M706.6 202.2l1.2-1.5 1.2 1.5zM706.6 204l1.2 1.5 1.2-1.5z" fill="#e0e0e0" />
<rect x="719.3" y="199.8" width="7.4" height="5.8" fill="none" stroke="#a8a8a8" stroke-width="0.8"/>
<path d="M720.5 205.2v-1.2l1.4-1.3 0.9 0.9 1.3-2 1.3 2v1.6z" fill="#a8a8a8" />
<circle cx="737.2" cy="202.6" r="3.2" fill="#b0b0b0"/>
<path d="M739.5 200.3a3.2 3.2 0 0 1 -4.5 4.5z" fill="#5a5a5a" />
<text x="747.8" y="206.5" font-family="Liberation Serif" font-size="9.5" font-weight="normal" font-style="normal" fill="#b4b4b4" textLength="6.60" lengthAdjust="spacingAndGlyphs" >T</text>
<path d="M763 200h5.5v5.5h-5.5z" fill="none" stroke="#b4b4b4" stroke-width="0.8" />
<rect x="762.2" y="199.2" width="1.7" height="1.7" fill="#b4b4b4" />
<rect x="767.6" y="199.2" width="1.7" height="1.7" fill="#b4b4b4" />
<rect x="762.2" y="204.6" width="1.7" height="1.7" fill="#b4b4b4" />
<rect x="767.6" y="204.6" width="1.7" height="1.7" fill="#b4b4b4" />
<path d="M775.8 206.6v-4.2h2.4v-2.6h3.2l1.6 1.6v5.2z" fill="#b4b4b4" />
<rect x="791" y="198" width="4.2" height="9.5" fill="#3e3e3e" rx="1"/>
<rect x="791.4" y="198.4" width="3.4" height="4" fill="#606060" rx="0.8"/>
<rect x="658" y="210.5" width="139" height="0.8" fill="#474747" />
<rect x="660.7" y="214" width="74.1" height="10" fill="#5a5a5a" rx="1.5"/>
<rect x="660.7" y="214" width="74.1" height="10" fill="none" rx="1.5" stroke="#444" stroke-width="0.8"/>
<text x="664.8" y="221.2" font-family="Liberation Sans" font-size="6.6" font-weight="normal" font-style="normal" fill="#e8e8e8" textLength="18.20" lengthAdjust="spacingAndGlyphs" >Normal</text>
<path d="M730.6 218.3l1.2-1.5 1.2 1.5zM730.6 220.1l1.2 1.5 1.2-1.5z" fill="#e0e0e0" />
<text x="740" y="221.6" font-family="Liberation Sans" font-size="6.6" font-weight="normal" font-style="normal" fill="#d8d8d8" textLength="21.10" lengthAdjust="spacingAndGlyphs" >Opacity:</text>
<rect x="764" y="214" width="20.6" height="10" fill="#4a4a4a" />
<text x="767" y="221.3" font-family="Liberation Sans" font-size="6.2" font-weight="normal" font-style="normal" fill="#6a6a6a" textLength="14.70" lengthAdjust="spacingAndGlyphs" >100%</text>
<rect x="784.6" y="214" width="10.6" height="10" fill="#5c5c5c" />
<path d="M788.4 218.5h3l-1.5 1.6z" fill="#d8d8d8" />
<rect x="658" y="227.5" width="139" height="0.8" fill="#474747" />
<text x="661.3" y="238.2" font-family="Liberation Sans" font-size="6.6" font-weight="normal" font-style="normal" fill="#d8d8d8" textLength="13.50" lengthAdjust="spacingAndGlyphs" >Lock:</text>
<rect x="680.7" y="232.8" width="6.5" height="6.5" fill="#8a8a8a" />
<rect x="680.7" y="232.8" width="3.25" height="3.25" fill="#d0d0d0" />
<rect x="683.95" y="236.05" width="3.25" height="3.25" fill="#d0d0d0" />
<path d="M695.5 237.2l6.4-5.6" fill="none" stroke="#d0d0d0" stroke-width="1.1" />
<path d="M693 238.8c0.5-1.5 1.2-2.4 2.6-2.2l0.6 0.6c0 1.2-1.2 1.8-3.2 1.6z" fill="#d0d0d0" />
<path d="M709.5 232.4v6.6M706.2 235.7h6.6" fill="none" stroke="#d0d0d0" stroke-width="0.9" />
<path d="M708.3 233.2l1.2-1.5 1.2 1.5zM708.3 238.2l1.2 1.5 1.2-1.5zM707 234.5l-1.5 1.2 1.5 1.2zM712 234.5l1.5 1.2-1.5 1.2z" fill="#d0d0d0" />
<rect x="719.6" y="235" width="6.4" height="4.3" fill="#d0d0d0" />
<path d="M721 235v-1.3a1.8 1.8 0 0 1 3.6 0v1.3" fill="none" stroke="#d0d0d0" stroke-width="0.9" />
<text x="752.9" y="238.2" font-family="Liberation Sans" font-size="6.6" font-weight="normal" font-style="normal" fill="#d8d8d8" textLength="8.20" lengthAdjust="spacingAndGlyphs" >Fill:</text>
<rect x="764" y="230.5" width="20.6" height="10" fill="#4a4a4a" />
<text x="767" y="237.8" font-family="Liberation Sans" font-size="6.2" font-weight="normal" font-style="normal" fill="#6a6a6a" textLength="14.70" lengthAdjust="spacingAndGlyphs" >100%</text>
<rect x="784.6" y="230.5" width="10.6" height="10" fill="#5c5c5c" />
<path d="M788.4 235h3l-1.5 1.6z" fill="#d8d8d8" />
<rect x="658" y="244" width="139" height="1" fill="#3a3a3a" />
<rect x="658" y="245" width="131" height="168" fill="#4a4a4a" />
<rect x="789.5" y="245" width="7.5" height="168" fill="#464646" />
<rect x="789.5" y="245" width="1" height="168" fill="#3a3a3a" />
<rect x="675.6" y="244.6" width="113.8" height="15.2" fill="#6a7f99" />
<rect x="658" y="259.8" width="131" height="0.8" fill="#3e3e3e" />
<rect x="675" y="244.6" width="0.7" height="15.2" fill="#3e3e3e" />
<path d="M663 252.3c1.2-1.6 2.5-2.3 3.7-2.3s2.5 0.7 3.7 2.3c-1.2 1.6-2.5 2.3-3.7 2.3s-2.5-0.7-3.7-2.3z" fill="#e8e8e8" />
<circle cx="666.7" cy="252.3" r="1.1" fill="#4a4a4a"/>
<rect x="677.3" y="247" width="19.9" height="10.6" fill="#2a2a2a" rx="0.8"/>
<rect x="678.3" y="248" width="17.9" height="8.6" fill="#ffffff" />
<text x="703" y="255.4" font-family="Liberation Sans" font-size="6.5" font-weight="bold" font-style="italic" fill="#f4f4f4" textLength="31.40" lengthAdjust="spacingAndGlyphs" >Background</text>
<rect x="774.4" y="252.3" width="5.4" height="3.6" fill="none" stroke="#e8e8e8" stroke-width="0.9"/>
<path d="M775.5 252.3v-1.6a1.6 1.6 0 0 1 3.2 0v1.6" fill="none" stroke="#e8e8e8" stroke-width="0.9" />
<rect x="776.8" y="253.4" width="0.7" height="1.5" fill="#e8e8e8" />
<rect x="658" y="412.3" width="139" height="11.7" fill="#535353" />
<rect x="658" y="412.3" width="139" height="0.8" fill="#3a3a3a" />
<path d="M681.5 419.5h4M682.3 417.3h-1.2a2.2 2.2 0 0 0 0 4.4h1.2M684.7 417.3h1.2a2.2 2.2 0 0 1 0 4.4h-1.2" fill="none" stroke="#dcdcdc" stroke-width="0.9" />
<text x="696" y="422.2" font-family="Liberation Serif" font-size="8" font-weight="normal" font-style="italic" fill="#dcdcdc" textLength="7.50" lengthAdjust="spacingAndGlyphs" >fx</text>
<rect x="711.7" y="416.5" width="8" height="6.3" fill="#e0e0e0" />
<circle cx="715.7" cy="419.6" r="1.8" fill="#333"/>
<circle cx="732" cy="419.5" r="3.2" fill="#e0e0e0"/>
<path d="M734 417.2l-4 4.6" fill="none" stroke="#333" stroke-width="1" />
<rect x="736" y="422.5" width="1" height="1" fill="#e0e0e0" />
<path d="M743 417h3l1 1h4v4.8h-8z" fill="#e0e0e0" />
<path d="M759 416.5h5l1.5 1.5v4.8h-6.5z" fill="#e0e0e0" />
<rect x="759.5" y="420" width="2" height="2" fill="#555" />
<path d="M775.9 418.3h5.2l-0.6 4.3h-4z" fill="none" stroke="#8a8a8a" stroke-width="0.8" />
<rect x="775.3" y="417" width="6.4" height="0.9" fill="#8a8a8a" />
<rect x="777.3" y="416.2" width="2.4" height="0.9" fill="#8a8a8a" />
<text x="627.6" y="390.2" font-family="Liberation Sans" font-size="10.6" fill="#c8c8c8" fill-opacity="0.55" textLength="91.8" lengthAdjust="spacingAndGlyphs">Activate Windows</text>
<text x="627.6" y="402.6" font-family="Liberation Sans" font-size="8.6" fill="#c8c8c8" fill-opacity="0.55" textLength="137.4" lengthAdjust="spacingAndGlyphs">Go to Settings to activate Windows.</text>
</svg></body></html>
